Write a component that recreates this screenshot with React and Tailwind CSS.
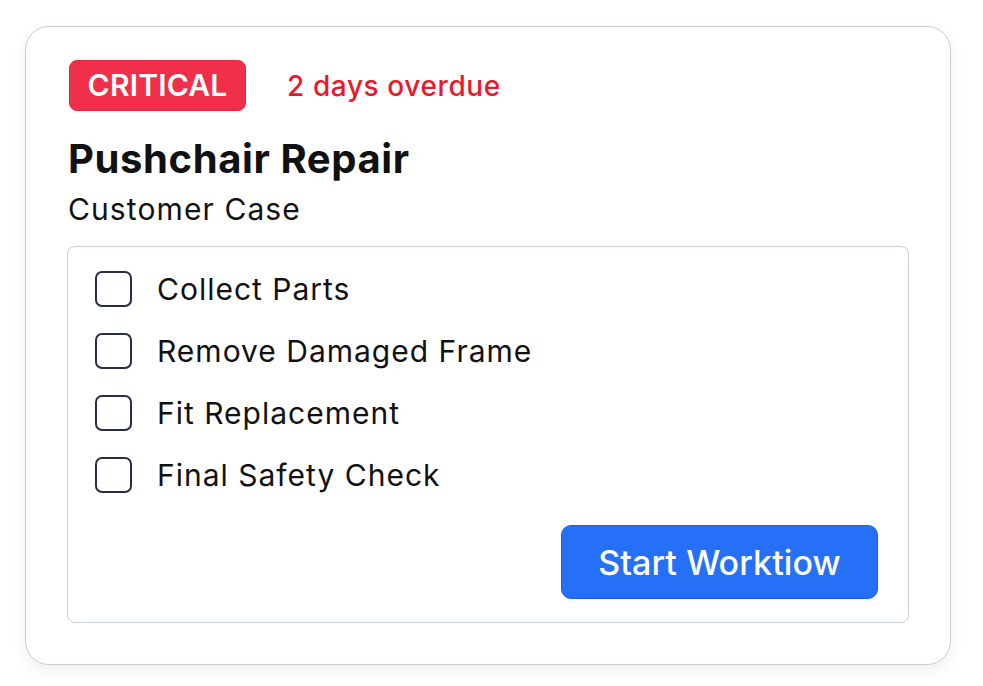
export default function App() {
  const items = ["Collect Parts", "Remove Damaged Frame", "Fit Replacement", "Final Safety Check"];
  return (
    <div className="w-[983px] h-[686px] bg-white" style={{ fontFamily: "Inter, 'Noto Sans', sans-serif" }}>
      <div className="pt-[26px] pl-[25px]">
        <div className="w-[926px] h-[639px] rounded-[24px] border border-[#c9cdd4] bg-white shadow-[0_6px_16px_rgba(0,0,0,0.06)] px-[41px] pt-[33px] flex flex-col">
          <div className="flex items-center ml-[2px]">
            <div className="h-[51px] w-[177px] rounded-[8px] bg-[#f0304a] border border-[#e22a41] flex items-center justify-center text-white text-[30px] font-semibold tracking-[0.2px]">
              CRITICAL
            </div>
            <div className="ml-[41px] text-[#e8192c] text-[28px] font-medium tracking-[0.6px]">2 days overdue</div>
          </div>
          <div className="mt-[27px] ml-[1px] text-[40px] font-bold text-[#111] leading-[42px] tracking-[0.6px]">Pushchair Repair</div>
          <div className="mt-[13px] ml-[1px] text-[30px] text-[#111] leading-[32px] tracking-[1.1px]">Customer Case</div>
          <div className="mt-[21px] flex-1 mb-[41px] rounded-[8px] border border-[#c9cdd4] pl-[27px] pr-[30px] pt-[24px] pb-[23px] flex flex-col">
            <div className="flex flex-col gap-[26px]">
              {items.map((t) => (
                <div key={t} className="flex items-center h-[36px]">
                  <div className="w-[37px] h-[36px] rounded-[7px] border-2 border-[#2a2d4a]"></div>
                  <div className="ml-[25px] text-[30px] text-[#111] tracking-[1px]">{t}</div>
                </div>
              ))}
            </div>
            <div className="mt-auto flex justify-end">
              <button className="w-[317px] h-[74px] rounded-[10px] bg-[#2570f7] border border-[#1a5fe6] text-white text-[34px] font-medium tracking-[0.1px]">
                Start Worktiow
              </button>
            </div>
          </div>
        </div>
      </div>
    </div>
  );
}
